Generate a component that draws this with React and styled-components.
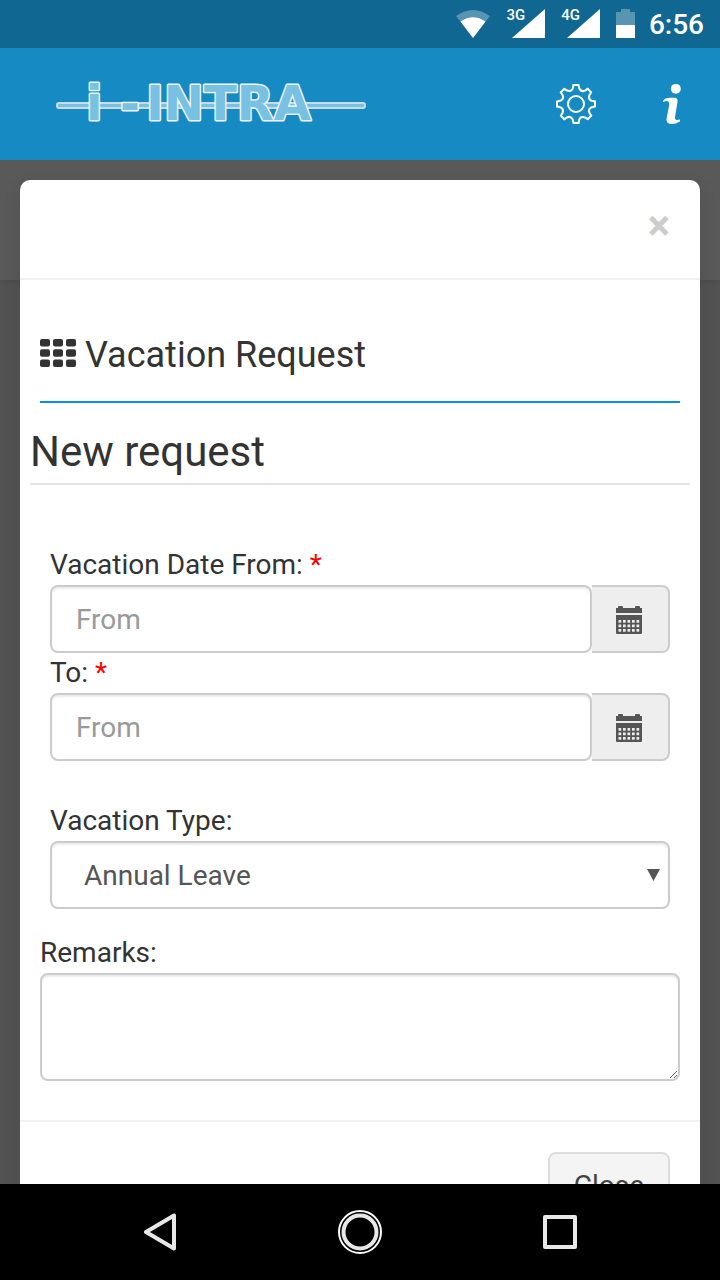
import { useState } from 'react';
import styled, { createGlobalStyle, css } from 'styled-components';

const FONT = "Roboto, 'Liberation Sans', sans-serif";
const TEXT = '#333';
const BORDER = '#ccc';
const BRAND = '#168ac2';
const BRAND_DARK = '#106791';

const GlobalStyle = createGlobalStyle`
  * {
    box-sizing: border-box;
  }

  body {
    margin: 0;
    background: #000;
    color: ${TEXT};
    font-family: ${FONT};
    font-size: 28px;
    line-height: 40px;
  }
`;

const Screen = styled.div`
  display: flex;
  flex-direction: column;
  height: 100vh;
`;

const StatusBar = styled.div`
  display: flex;
  flex: none;
  align-items: center;
  justify-content: flex-end;
  height: 48px;
  padding: 2px 16px 0;
  background: ${BRAND_DARK};
  color: #fff;
`;

const StatusIcons = styled.div`
  display: flex;
  align-items: center;
  gap: 16px;
  margin-right: 14px;
  padding-bottom: 3px;
`;

const Signal = styled.span`
  display: flex;
  align-items: flex-start;
  font-size: 15px;
  font-weight: 500;
  line-height: 12px;

  svg {
    margin-left: -13px;
  }
`;

const Clock = styled.time`
  font-size: 28px;
  font-weight: 500;
`;

const Header = styled.header`
  display: flex;
  flex: none;
  align-items: center;
  justify-content: space-between;
  height: 112px;
  padding: 0 16px 0 56px;
  background: ${BRAND};
`;

const Logo = styled.svg`
  font-family: 'DejaVu Sans', sans-serif;
  font-size: 48px;
  font-weight: bold;
`;

const HeaderActions = styled.div`
  display: flex;
  gap: 32px;
`;

const IconButton = styled.button`
  display: flex;
  align-items: center;
  justify-content: center;
  width: 64px;
  height: 64px;
  padding: 0;
  border: 0;
  background: none;
  color: #fff;
`;

const Main = styled.main`
  position: relative;
  flex: 1;
  min-height: 0;
  overflow: hidden;
  background: #535353;
`;

const PageTop = styled.div`
  height: 120px;
  background: #595959;
  box-shadow: 0 2px 6px rgba(0, 0, 0, 0.1);
`;

const ModalLayer = styled.div`
  position: absolute;
  inset: 0;
  padding: 20px;
  overflow: hidden;
`;

const Dialog = styled.section`
  border-radius: 10px;
  background: #fff;
  box-shadow: 0 6px 18px rgba(0, 0, 0, 0.1);
`;

const DialogHeader = styled.div`
  display: flex;
  justify-content: flex-end;
  height: 100px;
  padding: 25px 30px;
  border-bottom: 2px solid #f2f2f2;
`;

const CloseIcon = styled.button`
  align-self: flex-start;
  padding: 0;
  border: 0;
  background: none;
  color: #ccc;
  font-family: ${FONT};
  font-size: 42px;
  font-weight: bold;
  line-height: 42px;
`;

const DialogBody = styled.form`
  padding: 48px 10px 39px;
`;

const Title = styled.h1`
  display: flex;
  align-items: center;
  gap: 9px;
  margin: 0 10px;
  padding-bottom: 19px;
  border-bottom: 2px solid #0d8bf5;
  font-size: 36px;
  font-weight: 400;
  line-height: 54px;

  svg {
    margin-bottom: 4px;
  }
`;

const Legend = styled.h2`
  margin: 0 0 60px;
  padding-top: 18px;
  border-bottom: 2px solid #e5e5e5;
  font-size: 42px;
  font-weight: 400;
  line-height: 62px;
`;

const Field = styled.div`
  margin: 0 ${props => (props.$wide ? 10 : 20)}px;
  margin-bottom: ${props => props.$gap || 0}px;
`;

const Label = styled.label`
  display: block;
`;

const Required = styled.span`
  color: #f00;
`;

const control = css`
  display: block;
  width: 100%;
  height: 68px;
  padding: 12px 24px;
  border: 2px solid ${BORDER};
  border-radius: 8px;
  outline: 0;
  background: #fff;
  box-shadow: inset 0 2px 2px rgba(0, 0, 0, 0.075);
  color: #555;
  font-family: ${FONT};
  font-size: 28px;
  line-height: 40px;
`;

const InputGroup = styled.div`
  display: flex;
`;

const Input = styled.input`
  ${control}
  flex: 1;
  min-width: 0;

  &::placeholder {
    color: #999;
    opacity: 1;
  }
`;

const Addon = styled.button`
  display: flex;
  align-items: center;
  justify-content: center;
  width: 78px;
  padding: 2px 2px 0 0;
  border: 2px solid ${BORDER};
  border-left: 0;
  border-radius: 0 8px 8px 0;
  background: #eee;
  color: #555;
`;

const SelectWrap = styled.div`
  position: relative;

  svg {
    position: absolute;
    top: 28px;
    right: 10px;
    pointer-events: none;
  }
`;

const Select = styled.select`
  ${control}
  padding: 12px 32px 10px;
  appearance: none;
`;

const Textarea = styled.textarea`
  ${control}
  height: 108px;
`;

const DialogFooter = styled.div`
  display: flex;
  justify-content: flex-end;
  padding: 30px;
  border-top: 2px solid #f2f2f2;
`;

const Button = styled.button`
  height: 68px;
  padding: 10px 24px;
  border: 2px solid #ddd;
  border-radius: 8px;
  background: #f4f4f4;
  color: #444;
  font-family: ${FONT};
  font-size: 28px;
  line-height: 40px;
`;

const NavBar = styled.nav`
  display: flex;
  flex: none;
  align-items: center;
  justify-content: center;
  gap: 136px;
  height: 96px;
  background: #000;
`;

function WifiIcon() {
  return (
    <svg width="34" height="28" viewBox="0 0 34 28" aria-hidden="true">
      <path d="M0 6Q17 -6 34 6L17 28Z" fill="#fff" opacity="0.3" />
      <path d="M4.5 11.5Q17 3 29.500 11.500L17 28Z" fill="#fff" />
    </svg>
  );
}

function SignalIcon() {
  return (
    <svg width="33" height="29" viewBox="0 0 33 29" aria-hidden="true">
      <path d="M33 0V29H0Z" fill="#fff" />
    </svg>
  );
}

function BatteryIcon() {
  return (
    <svg width="19" height="29" viewBox="0 0 19 29" aria-hidden="true">
      <path d="M0 3H5V0H14V3H19V16H0Z" fill="#fff" opacity="0.3" />
      <path d="M0 16H19V29H0Z" fill="#fff" />
    </svg>
  );
}

function BrandLogo() {
  return (
    <Logo width="310" height="56" viewBox="0 0 310 56" role="img" aria-label="i-INTRA">
      <rect x="1" y="27" width="308" height="5" rx="2" fill="#78c1e2" stroke="#c9dce8" strokeWidth="2" />
      <g fill="#78c1e2" stroke="#eef3f6" strokeWidth="3" paintOrder="stroke" strokeLinejoin="round">
        <text x="30" y="44">i</text>
        <text x="64" y="44">-</text>
        <text x="90" y="44">INTRA</text>
      </g>
    </Logo>
  );
}

function GearIcon() {
  // One tooth and the valley after it, repeated every 45 degrees
  const tooth = 'M-2.500 -19H2.500L3.200 -15.800Q5.400 -11.600 8.910 -13.430L11.670 -15.200';
  return (
    <svg width="40" height="40" viewBox="-20 -20 40 40" fill="none" stroke="currentColor" strokeWidth="2" aria-hidden="true">
      {[0, 45, 90, 135, 180, 225, 270, 315].map(angle => (
        <path key={angle} d={tooth} transform={`rotate(${angle})`} strokeLinejoin="round" strokeLinecap="round" />
      ))}
      <circle r="8" />
    </svg>
  );
}

function InfoIcon() {
  return (
    <svg width="18" height="40" viewBox="0 0 18 40" fill="currentColor" aria-hidden="true">
      <circle cx="12.800" cy="4.800" r="5" />
      <path d="M0 17.500C1 14.500 4 13.700 8 13.700H12Q15 14 14.500 18L12 33Q11.700 36 14 36L17 35.500V37.500Q13 40 8 40Q3 39.500 3.500 35L6 22Q6.500 17 4 17Q2 17 0 18Z" />
    </svg>
  );
}

function GridIcon() {
  return (
    <svg width="36" height="28" viewBox="0 0 36 28" fill="currentColor" aria-hidden="true">
      {[0, 10.3, 20.6].map(y =>
        [0, 13, 26].map(x => <rect key={`${x}_${y}`} x={x} y={y} width="10" height="7.4" rx="2" />)
      )}
    </svg>
  );
}

function CalendarIcon() {
  return (
    <svg width="26" height="28" viewBox="0 0 26 28" aria-hidden="true">
      <path
        d="M0 7V2H2V1Q2 0 3 0H6Q7 0 7 1V2H19V1Q19 0 20 0H23Q24 0 24 1V2H26V7ZM0 9H26V27Q26 28 25 28H1Q0 28 0 27Z"
        fill="currentColor"
      />
      {[14, 18.5, 23].map(y =>
        [2.5, 7, 11.500, 16, 20.5].map(x => (
          <rect key={`${x}_${y}`} x={x} y={y} width="2.700" height="2.700" fill="#eee" />
        ))
      )}
    </svg>
  );
}

function DateField({ id, label, gap }) {
  const [value, setValue] = useState('');
  return (
    <Field $gap={gap}>
      <Label htmlFor={id}>
        {label} <Required>*</Required>
      </Label>
      <InputGroup>
        <Input id={id} type="text" placeholder="From" value={value} onChange={event => setValue(event.target.value)} />
        <Addon type="button" aria-label="Pick a date">
          <CalendarIcon />
        </Addon>
      </InputGroup>
    </Field>
  );
}

function VacationDialog() {
  return (
    <Dialog role="dialog" aria-labelledby="dialog-title">
      <DialogHeader>
        <CloseIcon type="button" aria-label="Close dialog">×</CloseIcon>
      </DialogHeader>
      <DialogBody id="vacation-form">
        <Title id="dialog-title">
          <GridIcon />
          Vacation Request
        </Title>
        <Legend>New request</Legend>
        <DateField id="date-from" label="Vacation Date From:" />
        <DateField id="date-to" label="To:" gap={40} />
        <Field $gap={24}>
          <Label htmlFor="vacation-type">Vacation Type:</Label>
          <SelectWrap>
            <Select id="vacation-type">
              <option>Annual Leave</option>
            </Select>
            <svg width="13" height="12" viewBox="0 0 13 12" aria-hidden="true">
              <path d="M0 0H13L6.500 12Z" fill="#555" />
            </svg>
          </SelectWrap>
        </Field>
        <Field $wide>
          <Label htmlFor="remarks">Remarks:</Label>
          <Textarea id="remarks" />
        </Field>
      </DialogBody>
      <DialogFooter>
        <Button type="button">Close</Button>
      </DialogFooter>
    </Dialog>
  );
}

function App() {
  return (
    <Screen>
      <GlobalStyle />
      <StatusBar>
        <StatusIcons>
          <WifiIcon />
          <Signal>
            3G
            <SignalIcon />
          </Signal>
          <Signal>
            4G
            <SignalIcon />
          </Signal>
          <BatteryIcon />
        </StatusIcons>
        <Clock>6:56</Clock>
      </StatusBar>
      <Header>
        <BrandLogo />
        <HeaderActions>
          <IconButton type="button" aria-label="Settings">
            <GearIcon />
          </IconButton>
          <IconButton type="button" aria-label="Information">
            <InfoIcon />
          </IconButton>
        </HeaderActions>
      </Header>
      <Main>
        <PageTop />
        <ModalLayer>
          <VacationDialog />
        </ModalLayer>
      </Main>
      <NavBar>
        <IconButton type="button" aria-label="Back">
          <svg width="32" height="38" viewBox="0 0 32 38" fill="none" stroke="#e8e8e8" strokeWidth="4" strokeLinejoin="round" aria-hidden="true">
            <path d="M2 19L30 2.500V35.500Z" />
          </svg>
        </IconButton>
        <IconButton type="button" aria-label="Home">
          <svg width="44" height="44" viewBox="0 0 44 44" fill="none" aria-hidden="true">
            <circle cx="22" cy="22" r="21" stroke="#fff" strokeWidth="2" />
            <circle cx="22" cy="22" r="16.500" stroke="#e8e8e8" strokeWidth="4" />
          </svg>
        </IconButton>
        <IconButton type="button" aria-label="Recent apps">
          <svg width="34" height="34" viewBox="0 0 34 34" fill="none" stroke="#e8e8e8" strokeWidth="4" strokeLinejoin="round" aria-hidden="true">
            <path d="M2 2H32V32H2Z" />
          </svg>
        </IconButton>
      </NavBar>
    </Screen>
  );
}

export default App;
